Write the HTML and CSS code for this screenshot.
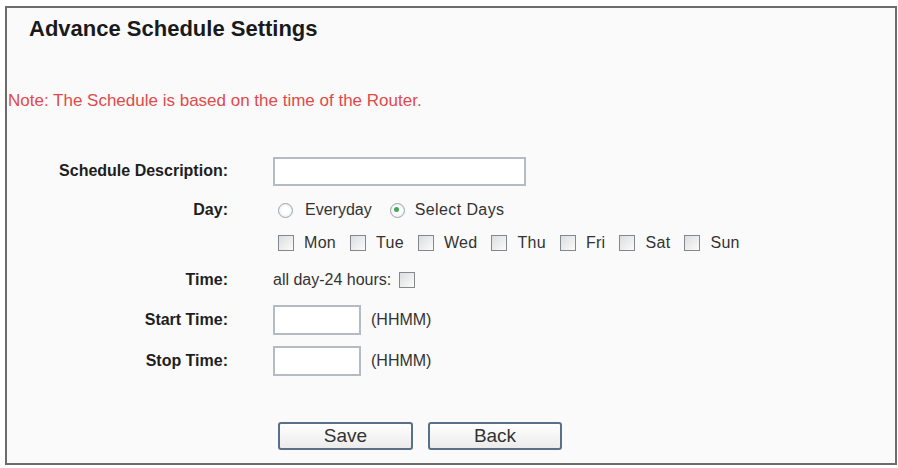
FILE: index.html
```html
<!DOCTYPE html>
<html>
<head>
<meta charset="utf-8">
<link rel="stylesheet" href="styles.css">
</head>
<body>
<div class="frame">
  <h1 class="title">Advance Schedule Settings</h1>
  <p class="note">Note: The Schedule is based on the time of the Router.</p>
  <div class="form">
    <div class="label">Schedule Description:</div>
    <div class="value"><span class="input wide"></span></div>

    <div class="label">Day:</div>
    <div class="value">
      <span class="radio"></span><span class="opt">Everyday</span>
      <span class="radio on"></span><span class="opt">Select Days</span>
    </div>

    <div class="label"></div>
    <div class="value days">
      <span class="check"></span><span class="opt">Mon</span>
      <span class="check"></span><span class="opt">Tue</span>
      <span class="check"></span><span class="opt">Wed</span>
      <span class="check"></span><span class="opt">Thu</span>
      <span class="check"></span><span class="opt">Fri</span>
      <span class="check"></span><span class="opt">Sat</span>
      <span class="check"></span><span class="opt">Sun</span>
    </div>

    <div class="label">Time:</div>
    <div class="value"><span class="plain">all day-24 hours:</span><span class="check"></span></div>

    <div class="label">Start Time:</div>
    <div class="value"><span class="input short"></span><span class="hint">(HHMM)</span></div>

    <div class="label">Stop Time:</div>
    <div class="value"><span class="input short"></span><span class="hint">(HHMM)</span></div>
  </div>
  <div class="buttons">
    <button class="btn save">Save</button>
    <button class="btn back">Back</button>
  </div>
</div>
</body>
</html>
```

FILE: styles.css
```css
html, body {
  margin: 0;
  padding: 0;
  background: #ffffff;
}
body {
  font-family: "Liberation Sans", Arial, sans-serif;
  color: #222;
}
.frame {
  box-sizing: border-box;
  margin: 6px 0 0 5px;
  width: 892px;
  height: 459px;
  border: 2px solid #6c6c6c;
  background: #fafafa;
}
.title {
  margin: 0;
  padding: 8px 0 0 22px;
  font-size: 22px;
  font-weight: bold;
  line-height: 26px;
  color: #1a1a1a;
}
.note {
  margin: 0;
  padding: 49px 0 0 1px;
  font-size: 17px;
  line-height: 20px;
  color: #e04a4a;
}
.form {
  display: grid;
  grid-template-columns: 221px 1fr;
  column-gap: 45px;
  grid-template-rows: 38px 40px 26px 48px 32px 50px;
  margin-top: 41px;
  align-items: center;
}
.label {
  text-align: right;
  font-weight: bold;
  font-size: 16px;
  color: #1e1e1e;
  white-space: nowrap;
}
.value {
  display: flex;
  align-items: center;
  font-size: 16px;
  color: #333;
  white-space: nowrap;
}
.input {
  display: inline-block;
  box-sizing: border-box;
  height: 29px;
  background: #fff;
  border: 2px solid #b5bbc2;
}
.input.wide { width: 253px; }
.input.short { width: 88px; height: 30px; }
.radio {
  display: inline-block;
  box-sizing: border-box;
  width: 15px;
  height: 15px;
  border-radius: 50%;
  border: 1.5px solid #9ea3a8;
  background: radial-gradient(circle, #ffffff 35%, #e2e5e8 100%);
  margin: 0 12px 0 5px;
  position: relative;
  flex: none;
}
.radio + .opt { margin-right: 18px; }
.radio.on::after {
  content: "";
  position: absolute;
  left: 3.5px;
  top: 3.5px;
  width: 5px;
  height: 5px;
  border-radius: 50%;
  background: #46a656;
}
.radio.on { margin-left: 0; margin-right: 10px; }
.radio.on + .opt { letter-spacing: 0.4px; }
.check {
  display: inline-block;
  box-sizing: border-box;
  width: 16px;
  height: 16px;
  border: 1.5px solid #84888c;
  background: linear-gradient(135deg, #dcdddf, #fbfbfb);
  flex: none;
}
.days .check { margin-right: 10px; }
.days .check:first-child { margin-left: 5px; }
.days .opt { margin-right: 14px; letter-spacing: 0.3px; }
.plain { margin-right: 8px; }
.hint { margin-left: 10px; color: #333; }
.buttons {
  display: flex;
  gap: 15px;
  margin: 36px 0 0 271px;
}
.btn {
  box-sizing: border-box;
  height: 28px;
  border: 2px solid #5a6f88;
  border-radius: 3px;
  background: linear-gradient(#ffffff, #ebebeb);
  font-family: "Liberation Sans", Arial, sans-serif;
  font-size: 19px;
  color: #333;
  padding: 0;
}
.btn.save { width: 135px; }
.btn.back { width: 134px; }
```
